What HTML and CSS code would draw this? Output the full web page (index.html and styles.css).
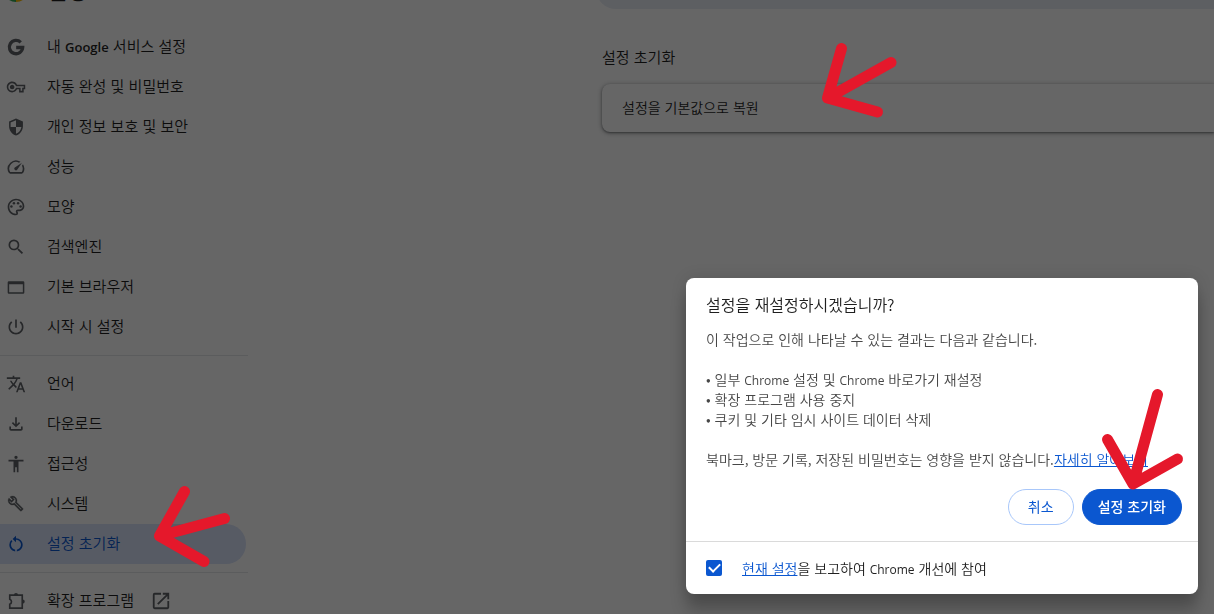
FILE: index.html
```html
<!DOCTYPE html>
<html lang="ko">
<head>
<meta charset="utf-8">
<title>설정</title>
<link rel="stylesheet" href="styles.css">
</head>
<body>
<div class="app">
  <aside class="sidebar">
    <header class="brand">
      <svg class="logo" viewBox="0 0 24 24" aria-hidden="true">
        <path fill="#ea4335" d="M12 12 1.6 6A12 12 0 0 1 22.4 6z"/>
        <path fill="#34a853" d="M12 12 1.6 6A12 12 0 0 0 12 24z"/>
        <path fill="#fbbc04" d="M12 12H22.4V6A12 12 0 0 1 12 24z"/>
        <circle cx="12" cy="12" r="5.5" fill="#4285f4" stroke="#fff" stroke-width="1.5"/>
      </svg>
      <h1 class="brand-title">설정</h1>
    </header>
    <nav class="menu">
      <a class="item" href="#people"><svg class="icon" viewBox="0 0 24 24"><path class="g-mark" d="M17.7 6.4A8 8 0 1 0 20 12.6H12.2"/></svg><span>내 <b>Google</b> 서비스 설정</span></a>
      <a class="item" href="#autofill"><svg class="icon" viewBox="-1 -1 26 26"><path d="M22 19h-6v-4h-2.68c-1.14 2.42-3.6 4-6.32 4-3.86 0-7-3.14-7-7s3.14-7 7-7c2.72 0 5.17 1.58 6.32 4H24v6h-2v4zm-4-2h2v-4h2v-2H11.94l-.23-.67C11.01 8.34 9.11 7 7 7c-2.76 0-5 2.24-5 5s2.24 5 5 5c2.11 0 4.01-1.34 4.71-3.33l.23-.67H18v4zM7 15c-1.65 0-3-1.35-3-3s1.35-3 3-3 3 1.35 3 3-1.35 3-3 3z"/></svg><span>자동 완성 및 비밀번호</span></a>
      <a class="item" href="#privacy"><svg class="icon" viewBox="-1 -1 26 26"><path d="M12 1L3 5v6c0 5.55 3.84 10.74 9 12 5.16-1.26 9-6.45 9-12V5l-9-4zm0 10.99h7c-.53 4.12-3.28 7.79-7 8.94V12H5V6.3l7-3.11v8.8z"/></svg><span>개인 정보 보호 및 보안</span></a>
      <a class="item" href="#performance"><svg class="icon" viewBox="0 0 24 24"><path d="M20.38 8.57l-1.23 1.85a8 8 0 0 1-.22 7.58H5.07A8 8 0 0 1 15.58 6.85l1.85-1.23A10 10 0 0 0 3.35 19a2 2 0 0 0 1.72 1h13.85a2 2 0 0 0 1.74-1 10 10 0 0 0-.27-10.44zm-9.79 6.84a2 2 0 0 0 2.83 0l5.66-8.49-8.49 5.66a2 2 0 0 0 0 2.83z"/></svg><span>성능</span></a>
      <a class="item" href="#appearance"><svg class="icon" viewBox="0 0 24 24"><path d="M12 22C6.49 22 2 17.51 2 12S6.49 2 12 2s10 4.04 10 9c0 3.31-2.69 6-6 6h-1.77c-.28 0-.5.22-.5.5 0 .12.05.23.13.33.41.47.64 1.06.64 1.67A2.5 2.5 0 0 1 12 22zm0-18c-4.41 0-8 3.59-8 8s3.59 8 8 8c.28 0 .5-.22.5-.5a.54.54 0 0 0-.14-.35c-.41-.46-.63-1.05-.63-1.65a2.5 2.5 0 0 1 2.5-2.5H16c2.21 0 4-1.79 4-4 0-3.86-3.59-7-8-7z"/><circle cx="6.5" cy="11.5" r="1.5"/><circle cx="9.5" cy="7.5" r="1.5"/><circle cx="14.5" cy="7.5" r="1.5"/><circle cx="17.5" cy="11.5" r="1.5"/></svg><span>모양</span></a>
      <a class="item" href="#search"><svg class="icon" viewBox="0 0 24 24"><path d="M15.5 14h-.79l-.28-.27A6.471 6.471 0 0 0 16 9.5 6.5 6.5 0 1 0 9.5 16c1.61 0 3.09-.59 4.23-1.57l.27.28v.79l5 4.99L20.49 19l-4.99-5zm-6 0C7.01 14 5 11.99 5 9.5S7.01 5 9.5 5 14 7.01 14 9.5 11.99 14 9.5 14z"/></svg><span>검색엔진</span></a>
      <a class="item" href="#default"><svg class="icon" viewBox="0 0 24 24"><path fill-rule="evenodd" d="M3.5 5h17A1.5 1.5 0 0 1 22 6.5v12a1.5 1.5 0 0 1-1.5 1.5h-17A1.5 1.5 0 0 1 2 18.5v-12A1.5 1.5 0 0 1 3.5 5zM3.8 8.8v9.4h16.4V8.8z"/></svg><span>기본 브라우저</span></a>
      <a class="item" href="#startup"><svg class="icon" viewBox="0 0 24 24"><path d="M13 3h-2v10h2V3zm4.83 2.17l-1.42 1.42C17.99 7.86 19 9.81 19 12c0 3.87-3.13 7-7 7s-7-3.13-7-7c0-2.19 1.01-4.14 2.58-5.42L6.17 5.17C4.23 6.82 3 9.26 3 12c0 4.97 4.03 9 9 9s9-4.03 9-9c0-2.74-1.23-5.18-3.17-6.83z"/></svg><span>시작 시 설정</span></a>
      <hr class="rule">
      <a class="item" href="#languages"><svg class="icon" viewBox="0 0 24 24"><path d="M12.87 15.07l-2.54-2.51.03-.03c1.74-1.94 2.98-4.17 3.71-6.53H17V4h-7V2H8v2H1v1.99h11.17C11.5 7.92 10.44 9.75 9 11.35 8.07 10.32 7.3 9.19 6.69 8h-2c.73 1.63 1.73 3.17 2.98 4.56l-5.09 5.02L4 19l5-5 3.11 3.11.76-2.04zM18.5 10h-2L12 22h2l1.12-3h4.75L21 22h2l-4.5-12zm-2.62 7l1.62-4.33L19.12 17h-3.24z"/></svg><span>언어</span></a>
      <a class="item" href="#downloads"><svg class="icon" viewBox="0 0 24 24"><path d="M12 16l-5-5 1.4-1.45 2.6 2.6V4h2v8.15l2.6-2.6L17 11zM6 20c-1.1 0-2-.9-2-2v-3h2v3h12v-3h2v3c0 1.1-.9 2-2 2z"/></svg><span>다운로드</span></a>
      <a class="item" href="#a11y"><svg class="icon" viewBox="0 0 24 24"><path d="M12 2a2 2 0 1 1 0 4 2 2 0 0 1 0-4zM21 9h-6v13h-2v-6h-2v6H9V9H3V7h18z"/></svg><span>접근성</span></a>
      <a class="item" href="#system"><svg class="icon" viewBox="-2 -2 29 29"><path stroke="#5f6368" stroke-width=".4" d="M22.61 18.99l-9.08-9.08c.93-2.34.45-5.1-1.44-7C9.79.61 6.21.4 3.66 2.26L7.5 6.11 6.08 7.52 2.25 3.69C.39 6.23.6 9.82 2.9 12.11c1.86 1.86 4.57 2.35 6.89 1.48l9.11 9.11c.39.39 1.02.39 1.41 0l2.3-2.3c.4-.38.4-1.01 0-1.41zm-3 1.6l-9.46-9.46c-.61.45-1.29.72-2 .82-1.36.2-2.79-.21-3.83-1.25C3.37 9.76 2.93 8.5 3 7.26l3.09 3.09 4.24-4.24-3.09-3.09c1.24-.07 2.49.37 3.44 1.31 1.08 1.08 1.49 2.57 1.24 3.96-.12.71-.42 1.37-.88 1.96l9.45 9.45-.88.89z"/></svg><span>시스템</span></a>
      <a class="item item-active" href="#reset"><svg class="icon" viewBox="0 0 24 24"><path d="M12 5V2L8 6l4 4V7c3.31 0 6 2.69 6 6 0 2.97-2.17 5.43-5 5.91v2.02c3.95-.49 7-3.85 7-7.93 0-4.42-3.58-8-8-8zM6 13c0-1.65.67-3.15 1.76-4.24L6.34 7.34A8 8 0 0 0 4 13c0 4.08 3.05 7.44 7 7.93v-2.02c-2.83-.48-5-2.94-5-5.91z"/></svg><span>설정 초기화</span></a>
      <hr class="rule">
      <a class="item" href="#extensions"><svg class="icon" viewBox="0 0 24 24"><path class="outline" d="M4.5 5h15v15.5h-15v-4.7a3.2 3.2 0 0 0 0-6z"/><path d="M9.5 5a2.5 2.5 0 0 1 5 0zM20 10.2a2.5 2.5 0 0 1 0 5z"/></svg><span>확장 프로그램</span><svg class="icon icon-external" viewBox="1 1 22 22"><path d="M19 19H5V5h7V3H5a2 2 0 0 0-2 2v14a2 2 0 0 0 2 2h14c1.1 0 2-.9 2-2v-7h-2v7zM14 3v2h3.59l-9.83 9.83 1.41 1.41L19 6.41V10h2V3h-7z"/></svg></a>
    </nav>
  </aside>
  <main class="content">
    <div class="search-bar"></div>
    <h2 class="section-title">설정 초기화</h2>
    <a class="card" href="#restore">설정을 기본값으로 복원</a>
  </main>
</div>

<div class="backdrop"></div>

<section class="dialog" role="dialog" aria-labelledby="dialog-title">
  <div class="dialog-main">
    <h2 class="dialog-title" id="dialog-title">설정을 재설정하시겠습니까?</h2>
    <div class="dialog-body">
      <p>이 작업으로 인해 나타날 수 있는 결과는 다음과 같습니다.</p>
      <p>• 일부 <span class="latin">Chrome</span> 설정 및 <span class="latin">Chrome</span> 바로가기 재설정<br>• 확장 프로그램 사용 중지<br>• 쿠키 및 기타 임시 사이트 데이터 삭제</p>
      <p>북마크, 방문 기록, 저장된 비밀번호는 영향을 받지 않습니다.<a class="link" href="#learn">자세히 알아보기</a></p>
    </div>
    <div class="actions">
      <button class="button" type="button">취소</button>
      <button class="button button-primary" type="button">설정 초기화</button>
    </div>
  </div>
  <footer class="dialog-footer">
    <input class="check" type="checkbox" id="report" checked>
    <label for="report"><a class="link" href="#current">현재 설정</a>을 보고하여 <span class="latin">Chrome</span> 개선에 참여</label>
  </footer>
</section>

<svg class="marks" width="1214" height="614" viewBox="0 0 1214 614" aria-hidden="true">
  <path d="M841.5 48.5 827.5 98 891 62.5M827.5 98 877.5 112"/>
  <path d="M184.5 491.5 159.5 536 224.5 518.5M159.5 536 204 561.5"/>
  <path d="M1157.5 394.5 1133 484 1107.5 439.5M1133 484 1177.5 459"/>
</svg>
</body>
</html>
```

FILE: styles.css
```css
* {
  box-sizing: border-box;
}

body {
  margin: 0;
  height: 100vh;
  overflow: hidden;
  background: #fff;
  color: #1f1f1f;
  font-family: "Noto Sans CJK KR", sans-serif;
  font-size: 14px;
  font-weight: 350;
  line-height: 20px;
}

h1,
h2,
p {
  margin: 0;
  font-weight: inherit;
}

a {
  color: inherit;
  text-decoration: none;
}

.latin {
  font-family: "Open Sans", sans-serif;
  font-size: 12px;
  font-weight: 400;
  line-height: 1;
}

.app {
  display: grid;
  grid-template-columns: 248px 1fr;
  gap: 354px;
  height: 100%;
  overflow: hidden;
}

/* The page is scrolled a little, so the header is partly out of view. */
.brand {
  display: flex;
  align-items: center;
  gap: 19px;
  height: 24px;
  margin-top: -22px;
  padding-left: 4px;
}

.logo {
  width: 24px;
  height: 24px;
}

.brand-title {
  padding-bottom: 2px;
  font-size: 22px;
  line-height: 24px;
}

.menu {
  padding-top: 25px;
}

.item {
  display: flex;
  align-items: center;
  gap: 21px;
  height: 40px;
  margin-right: 2px;
  padding-left: 6px;
  border-radius: 0 20px 20px 0;
  font-size: 15px;
}

.item span {
  padding-bottom: 2px;
}

.item b {
  font-family: "Open Sans", sans-serif;
  font-size: 13px;
  font-weight: 600;
  line-height: 1;
}

.item-active {
  background: #d9e3fb;
  color: #0b57d0;
}

.icon {
  width: 20px;
  height: 20px;
  fill: #5f6368;
}

.item-active .icon {
  fill: currentColor;
}

.icon-external {
  margin-left: -4px;
}

.outline {
  fill: none;
  stroke: #5f6368;
  stroke-width: 2;
}

.g-mark {
  fill: none;
  stroke: #5f6368;
  stroke-width: 4;
}

.rule {
  height: 1px;
  margin: 8px 0;
  border: 0;
  background: #e4e6e9;
}

.search-bar {
  height: 40px;
  margin: -31px 0 0 -6px;
  border-radius: 20px 0 0 20px;
  background: #e9eef6;
}

.section-title {
  margin: 38px 0 17px;
  font-size: 15px;
}

.card {
  display: flex;
  align-items: center;
  height: 48px;
  padding: 0 20px 2px;
  border-radius: 8px 0 0 8px;
  box-shadow: 0 1px 2px rgba(60, 64, 67, .5), 0 1px 4px 1px rgba(60, 64, 67, .3);
}

.backdrop {
  position: fixed;
  inset: 0;
  background: rgba(0, 0, 0, .6);
}

.dialog {
  position: fixed;
  right: 16px;
  bottom: 20px;
  width: 512px;
  border-radius: 8px;
  background: #fff;
  box-shadow: 0 0 16px rgba(0, 0, 0, .12), 0 16px 16px rgba(0, 0, 0, .24);
}

.dialog-main {
  padding: 14px 16px 16px 20px;
}

.dialog-title {
  font-size: 16px;
  line-height: 24px;
}

.dialog-body {
  display: grid;
  gap: 20px;
  padding: 13px 0 20px;
  color: #474747;
}

.link {
  color: #0b57d0;
  text-decoration: underline;
}

.actions {
  display: flex;
  justify-content: flex-end;
  gap: 8px;
}

.button {
  height: 36px;
  min-width: 66px;
  padding: 0 15px 2px;
  border: 1px solid #a8c7fa;
  border-radius: 18px;
  background: #fff;
  color: #0b57d0;
  font: inherit;
  font-weight: 400;
}

.button-primary {
  border-color: #0b57d0;
  background: #0b57d0;
  color: #fff;
  font-weight: 500;
}

.dialog-footer {
  display: flex;
  align-items: center;
  gap: 20px;
  height: 53px;
  padding: 0 20px;
  border-top: 1px solid #dadada;
}

.check {
  display: grid;
  place-items: center;
  width: 16px;
  height: 16px;
  margin: 0;
  appearance: none;
  border-radius: 2px;
  background: #0b57d0;
}

.check::before {
  content: "";
  width: 9px;
  height: 5px;
  margin-bottom: 3px;
  border: solid #fff;
  border-width: 0 0 2px 2px;
  rotate: -45deg;
}

.dialog-footer label {
  padding-bottom: 1px;
}

.marks {
  position: absolute;
  top: 0;
  left: 0;
  fill: none;
  stroke: #e5182b;
  stroke-width: 11;
  stroke-linecap: round;
  stroke-linejoin: round;
  pointer-events: none;
}
```
